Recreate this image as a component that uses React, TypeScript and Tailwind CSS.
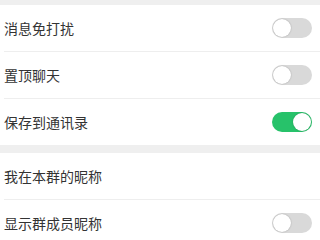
const Toggle = ({ on }: { on: boolean }) => (
  <div
    className={`relative w-[40px] h-[20px] rounded-full ${
      on ? "bg-[#27c26a]" : "bg-[#d9d9d9]"
    }`}
  >
    <div
      className={`absolute top-[1px] w-[18px] h-[18px] rounded-full bg-white shadow-[0_0_1.5px_rgba(0,0,0,0.3)] ${
        on ? "right-[1px]" : "left-[1px]"
      }`}
    />
  </div>
);

const Row = ({
  label,
  toggle,
  on = false,
  divider = false,
}: {
  label: string;
  toggle?: boolean;
  on?: boolean;
  divider?: boolean;
}) => (
  <div className="bg-white">
    <div className="h-[46px] flex items-center justify-between pl-[4px] pr-[8px]">
      <span className="text-[14px] text-[#333333]">{label}</span>
      {toggle && <Toggle on={on} />}
    </div>
    {divider && <div className="ml-[4px] h-px bg-[#eeeeee]" />}
  </div>
);

export default function App() {
  return (
    <div
      className="w-[320px] h-[240px] overflow-hidden bg-[#efefef]"
      style={{ fontFamily: '"Noto Sans CJK SC", "Noto Sans", sans-serif' }}
    >
      <div className="h-[5px]" />
      <Row label="消息免打扰" toggle divider />
      <Row label="置顶聊天" toggle divider />
      <Row label="保存到通讯录" toggle on />
      <div className="h-[8px]" />
      <Row label="我在本群的昵称" divider />
      <Row label="显示群成员昵称" toggle />
    </div>
  );
}
